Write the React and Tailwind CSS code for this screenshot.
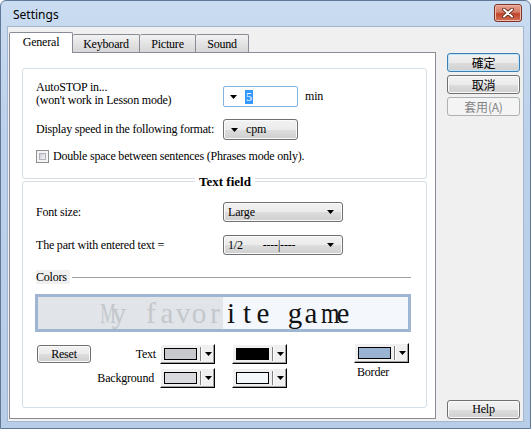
import React from 'react';

function Arrow() {
  return (
    <svg width="7" height="4" viewBox="0 0 7 4" className="shrink-0">
      <path d="M0 0h7L3.5 4z" fill="#000" />
    </svg>
  );
}

function Tab({ label, selected }) {
  if (selected) {
    return (
      <div className="h-[21px] w-[64px] border border-b-0 border-[#898c95] bg-white rounded-t-[2px] flex items-center justify-center pb-[1px] relative z-10">
        {label}
      </div>
    );
  }
  return (
    <div className="h-[18px] mb-[1px] border border-l-0 border-b-0 border-[#898c95] bg-[linear-gradient(#f3f3f3,#e3e3e3_50%,#d6d6d6)] rounded-t-[2px] flex items-center justify-center pt-[1px]">
      {label}
    </div>
  );
}

function SideButton({ children, focused, disabled, cjk }) {
  const border = focused
    ? 'border-[#3c7fb1] shadow-[inset_0_0_0_1px_#bfe4f8]'
    : disabled
    ? 'border-[#adb2b5]'
    : 'border-[#707070] shadow-[inset_0_0_0_1px_#fbfbfb]';
  const fill = disabled
    ? 'bg-[#f4f4f4] text-[#838383]'
    : 'bg-[linear-gradient(#f2f2f2,#ebebeb_50%,#dddddd_51%,#cfcfcf)] text-black';
  return (
    <div
      className={`h-[19px] w-[73px] rounded-[3px] border flex items-center justify-center ${border} ${fill} ${
        cjk ? "[font-family:'Noto_Sans_CJK_TC',sans-serif] text-[12px]" : 'text-[12px]'
      }`}
    >
      {children}
    </div>
  );
}

function Combo({ label, extra }) {
  return (
    <div className="w-[120px] h-[20px] rounded-[3px] border border-[#707070] bg-[linear-gradient(#f2f2f2,#ebebeb_50%,#dddddd_51%,#cfcfcf)] shadow-[inset_0_0_0_1px_#fafafa] flex items-center pl-[4px] pr-[8px]">
      <span className="whitespace-pre">{label}</span>
      {extra && <span className="ml-[20px] whitespace-pre">{extra}</span>}
      <div className="flex-1" />
      <Arrow />
    </div>
  );
}

function ColorButton({ color }) {
  return (
    <div className="w-[55px] h-[20px] bg-[#f0f0f0] border border-t-white border-l-white border-b-black border-r-black shadow-[inset_-1px_-1px_0_#a0a0a0] flex items-center pl-[3px]">
      <div className="w-[33px] h-[12px] border border-black" style={{ background: color }} />
      <div className="ml-[3px] h-[14px] w-[2px] border-l border-l-[#808080] border-r border-r-white" />
      <div className="ml-[3px]">
        <Arrow />
      </div>
    </div>
  );
}

// fixed-width cells like the original's half-width serif font
function Cells({ text }) {
  return text.split('').map((ch, i) => (
    <span key={i} className="inline-block w-[16px] text-center">
      <span
        className={`inline-block ${ch === 'M' ? 'scale-x-[0.6]' : ch === 'm' ? 'scale-x-[0.82]' : ''}`}
      >
        {ch === ' ' ? '\u00a0' : ch}
      </span>
    </span>
  ));
}

export default function App() {
  return (
    <div className="w-[531px] h-[429px] bg-white [font-family:'Liberation_Serif',serif] text-[12px] tracking-[-0.2px] text-black leading-[13px]">
      <div className="w-full h-full flex flex-col border border-[#5f7896] rounded-t-[6px] bg-[linear-gradient(#cadcf1,#bcd1ea_30%,#b8cde8)]">
        {/* title bar */}
        <div className="h-[26px] flex items-start pl-[12px] pr-[8px] shrink-0">
          <div className="mt-[7px] [font-family:'Noto_Sans',sans-serif] tracking-normal text-[12px] leading-[14px]">Settings</div>
          <div className="flex-1" />
          <div className="mt-[3px] w-[28px] h-[18px] rounded-[3px] border border-[#7b3427] bg-[linear-gradient(#e8a493,#d47c68_45%,#c2432c_55%,#d0735a)] shadow-[inset_0_0_0_1px_#f1b9aa] flex items-center justify-center">
            <svg width="12" height="10" viewBox="0 0 12 10">
              <path d="M2 1.5l8 7M10 1.5l-8 7" stroke="#5a2118" strokeWidth="3.6" strokeLinecap="round" />
              <path d="M2 1.5l8 7M10 1.5l-8 7" stroke="#fff" strokeWidth="2" strokeLinecap="round" />
            </svg>
          </div>
        </div>

        {/* client area */}
        <div className="flex-1 px-[7px] pb-[7px] flex">
          <div className="flex-1 bg-[#f0f0f0] shadow-[0_0_0_1px_#a3b7d0] flex pl-[1px]">
            {/* tab control */}
            <div className="w-[427px] mt-[5px] flex flex-col">
              <div className="flex items-end h-[21px] -mb-px">
                <Tab label="General" selected />
                <div className="w-[67px]"><Tab label="Keyboard" /></div>
                <div className="w-[56px]"><Tab label="Picture" /></div>
                <div className="w-[53px]"><Tab label="Sound" /></div>
              </div>
              <div className="h-[367px] border border-[#898c95] bg-white pl-[12px] pt-[15px]">
                {/* group 1 */}
                <div className="w-[405px] h-[111px] border border-[#d5dfe5] rounded-[3px] pl-[13px] pt-[12px] flex flex-col">
                  <div className="flex items-end">
                    <div className="w-[187px]">
                      <div>AutoSTOP in...</div>
                      <div>(won't work in Lesson mode)</div>
                    </div>
                    <div className="w-[75px] h-[21px] border border-[#84b2e0] rounded-[2px] bg-white flex items-center pl-[6px]">
                      <Arrow />
                      <span className="ml-[8px] bg-[#3399ff] text-white px-[1px] leading-[14px]">5</span>
                    </div>
                    <div className="ml-[7px] mb-[4px]">min</div>
                  </div>
                  <div className="flex items-center mt-[12px]">
                    <div className="w-[187px]">Display speed in the following format:</div>
                    <div className="w-[75px] h-[21px] rounded-[3px] border border-[#707070] bg-[linear-gradient(#f2f2f2,#ebebeb_50%,#dddddd_51%,#cfcfcf)] shadow-[inset_0_0_0_1px_#fafafa] flex items-center pl-[7px]">
                      <Arrow />
                      <span className="ml-[8px]">cpm</span>
                    </div>
                  </div>
                  <div className="flex items-center mt-[10px]">
                    <div className="w-[13px] h-[13px] border border-[#8e8f8f] bg-[#f4f4f4] p-[2px]">
                      <div className="w-full h-full border border-[#aeb3b9] bg-[linear-gradient(135deg,#cbcfd5,#f6f6f6)]" />
                    </div>
                    <div className="ml-[4px]">Double space between sentences (Phrases mode only).</div>
                  </div>
                </div>

                {/* group 2 */}
                <div className="relative mt-[2px] w-[405px] h-[227px] border border-[#d5dfe5] rounded-[3px] pl-[13px] flex flex-col">
                  <div className="absolute top-[-7px] left-[172px] bg-white px-[4px] font-bold text-[13px] tracking-normal leading-[14px]">Text field</div>
                  <div className="flex items-center mt-[20px]">
                    <div className="w-[187px]">Font size:</div>
                    <Combo label="Large" />
                  </div>
                  <div className="flex items-center mt-[13px]">
                    <div className="w-[187px]">The part with entered text =</div>
                    <Combo label="1/2" extra="----|----" />
                  </div>
                  <div className="flex items-center mt-[15px] w-[375px]">
                    <div className="bg-[#f0f0f0] pr-[3px] leading-[14px]">Colors</div>
                    <div className="flex-1 ml-[2px] border-t border-[#a0a0a0]" />
                  </div>
                  <div className="mt-[10px] -ml-[1px] w-[376px] h-[38px] border-[3px] border-[#9fb6d3] flex text-[29px] leading-[32px] tracking-normal">
                    <div className="flex-1 bg-[#e1e4e8] text-[#c4c7cc] flex justify-end whitespace-pre">
                      <Cells text="My favor" />
                    </div>
                    <div className="flex-1 bg-[#f4f8fd] text-[#111] flex whitespace-pre">
                      <Cells text="ite game" />
                    </div>
                  </div>
                  <div className="flex mt-[12px]">
                    <div className="w-[60px]">
                      <div className="ml-[1px] mt-[1px] w-[54px] h-[18px] rounded-[3px] border border-[#707070] bg-[linear-gradient(#f2f2f2,#ebebeb_50%,#dddddd_51%,#cfcfcf)] shadow-[inset_0_0_0_1px_#fafafa] flex items-center justify-center">
                        Reset
                      </div>
                    </div>
                    <div className="w-[60px] flex flex-col items-end gap-[4px]">
                      <div className="h-[20px] flex items-center">Text</div>
                      <div className="h-[20px] flex items-center pr-[2px]">Background</div>
                    </div>
                    <div className="ml-[4px] flex flex-col gap-[4px]">
                      <ColorButton color="#c8c9cd" />
                      <ColorButton color="#d8dadd" />
                    </div>
                    <div className="ml-[17px] flex flex-col gap-[4px]">
                      <ColorButton color="#000000" />
                      <ColorButton color="#f4f8fd" />
                    </div>
                    <div className="ml-[67px] flex flex-col">
                      <div className="-mt-[1px]">
                        <ColorButton color="#9ab3d3" />
                      </div>
                      <div className="mt-[3px] pl-[3px]">Border</div>
                    </div>
                  </div>
                </div>
              </div>
            </div>

            {/* side buttons */}
            <div className="ml-[11px] w-[73px] flex flex-col pt-[26px] pb-[2px] gap-[3px]">
              <SideButton focused cjk>確定</SideButton>
              <SideButton cjk>取消</SideButton>
              <SideButton disabled cjk>套用(A)</SideButton>
              <div className="flex-1" />
              <SideButton>Help</SideButton>
            </div>
          </div>
        </div>
      </div>
    </div>
  );
}
